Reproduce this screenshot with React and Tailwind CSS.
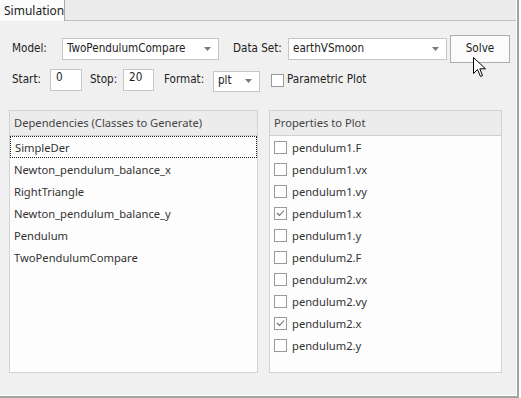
import React from "react";

const F = { fontFamily: '"Noto Sans", "Open Sans", sans-serif' };
const T = { fontFamily: '"DejaVu Sans Condensed", "DejaVu Sans", sans-serif', fontStretch: "semi-condensed" };

function Arrow() {
  return (
    <svg width="7" height="4" viewBox="0 0 7 4" className="shrink-0">
      <path d="M0 0 L7 0 L3.5 4 Z" fill="#7a7a7a" />
    </svg>
  );
}

function Select({ w, text }) {
  return (
    <div className={`${w} h-[22px] bg-white border border-[#c6c6c6] flex items-center justify-between pl-[4px] pr-[7px]`}>
      <span className="text-[11.6px] text-[#222] leading-none" style={T}>{text}</span>
      <Arrow />
    </div>
  );
}

function Box({ checked }) {
  return (
    <div className="w-[13px] h-[13px] border border-[#9a9a9a] bg-white flex items-center justify-center shrink-0">
      {checked && (
        <svg width="9" height="8" viewBox="0 0 9 8">
          <path d="M1 4 L3.5 6.5 L8 1.5" fill="none" stroke="#6a6a6a" strokeWidth="1.1" />
        </svg>
      )}
    </div>
  );
}

const deps = [
  "SimpleDer",
  "Newton_pendulum_balance_x",
  "RightTriangle",
  "Newton_pendulum_balance_y",
  "Pendulum",
  "TwoPendulumCompare",
];

const props = [
  ["pendulum1.F", false],
  ["pendulum1.vx", false],
  ["pendulum1.vy", false],
  ["pendulum1.x", true],
  ["pendulum1.y", false],
  ["pendulum2.F", false],
  ["pendulum2.vx", false],
  ["pendulum2.vy", false],
  ["pendulum2.x", true],
  ["pendulum2.y", false],
];

export default function App() {
  return (
    <div className="w-[521px] h-[398px] bg-white relative overflow-hidden" style={F}>
      <div className="w-[519px] h-[398px] border-r-2 border-b-2 border-[#a3a3a3] flex flex-col">
        <div className="flex-1 flex flex-col border-r border-b border-white">
          {/* tab strip */}
          <div className="h-[21px] bg-[#ebebeb] flex border-b border-[#c0c0c0] shrink-0">
            <div className="w-[65px] h-[21px] bg-[#fcfcfc] border-r border-[#a9a9a9] flex items-center pl-[4px]">
              <span className="text-[12px] text-[#222] leading-none">Simulation</span>
            </div>
          </div>
          {/* body */}
          <div className="flex-1 bg-[#f0f0f0] flex flex-col pt-[14px] pl-[12px] text-[11.6px] text-[#222]">
            {/* row 1 */}
            <div className="h-[28px] flex items-center" style={T}>
              <span className="w-[50px] leading-none">Model:</span>
              <Select w="w-[157px]" text="TwoPendulumCompare" />
              <span className="ml-[14px] w-[55px] leading-none">Data Set:</span>
              <Select w="w-[159px]" text="earthVSmoon" />
              <div className="ml-[3px] w-[60px] h-[28px] border border-[#adadad] bg-[#fbfbfb] flex items-center justify-center">
                <span className="leading-none text-[#222]">Solve</span>
              </div>
            </div>
            {/* row 2 */}
            <div className="h-[22px] mt-[6px] flex items-center" style={T}>
              <span className="w-[38px] leading-none">Start:</span>
              <div className="w-[32px] h-[22px] bg-white border border-[#c6c6c6] pl-[5px] pt-[2px] leading-none">0</div>
              <span className="ml-[8px] w-[33px] leading-none">Stop:</span>
              <div className="w-[31px] h-[22px] bg-white border border-[#c6c6c6] pl-[5px] pt-[2px] leading-none">20</div>
              <span className="ml-[10px] w-[49px] leading-none">Format:</span>
              <div className="w-[47px] h-[21px] mt-[2px] bg-white border border-[#c6c6c6] flex items-center justify-between pl-[4px] pr-[7px]">
                <span className="leading-none">plt</span>
                <Arrow />
              </div>
              <div className="ml-[11px] flex items-center">
                <Box />
                <span className="ml-[3px] leading-none">Parametric Plot</span>
              </div>
            </div>
            {/* panels */}
            <div className="mt-[19px] ml-[-3px] flex gap-[11px]">
              <div className="w-[249px] h-[263px] border border-[#d2d2d2] bg-[#fdfdfd] flex flex-col">
                <div className="h-[25px] bg-[#ececec] border-b border-[#cfcfcf] flex items-center pl-[4px] shrink-0">
                  <span className="text-[11.2px] text-[#444] leading-none">Dependencies (Classes to Generate)</span>
                </div>
                {deps.map((d, i) => (
                  <div
                    key={d}
                    className={`h-[22px] flex items-center pl-[4px] text-[11.2px] text-[#333] pt-[2px] ${i === 0 ? "border border-dotted border-[#222] pl-[3px]" : ""}`}
                  >
                    <span className="leading-none">{d}</span>
                  </div>
                ))}
              </div>
              <div className="w-[233px] h-[263px] border border-[#d2d2d2] bg-[#fdfdfd] flex flex-col">
                <div className="h-[25px] bg-[#ececec] border-b border-[#cfcfcf] flex items-center pl-[4px] shrink-0">
                  <span className="text-[11.2px] text-[#444] leading-none">Properties to Plot</span>
                </div>
                {props.map(([p, c]) => (
                  <div key={p} className="h-[22px] flex items-center pl-[4px] text-[11.2px] text-[#333]">
                    <Box checked={c} />
                    <span className="ml-[5px] leading-none pt-[2px]">{p}</span>
                  </div>
                ))}
              </div>
            </div>
          </div>
        </div>
      </div>
      {/* mouse cursor */}
      <svg className="absolute left-[473px] top-[57px]" width="14" height="22" viewBox="0 0 14 22">
        <path d="M0.5 0.5 L0.5 16.5 L4.5 12.5 L7.5 19.5 L9.5 18.5 L6.8 11.8 L12.5 11.8 Z" fill="#fff" stroke="#000" strokeWidth="1" strokeLinejoin="miter" />
      </svg>
    </div>
  );
}
